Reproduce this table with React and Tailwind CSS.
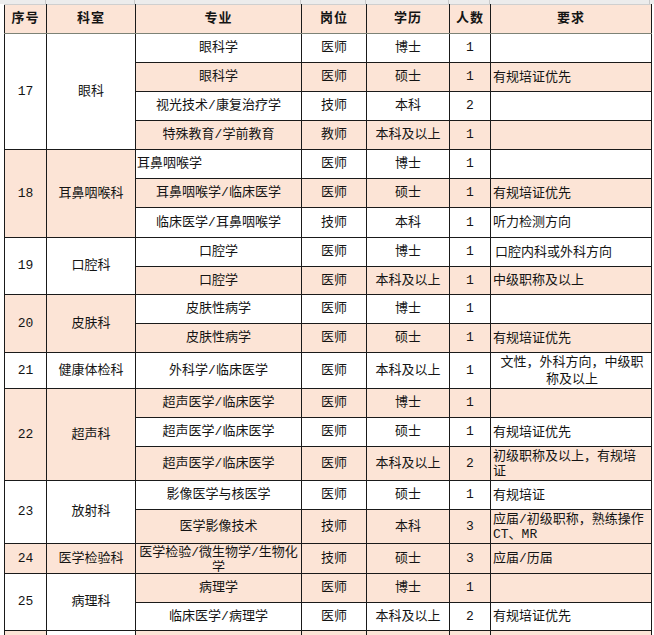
import React from "react";

const P = "bg-[#fce4d6]";
const W = "bg-white";

const groups = [
  {
    no: "17",
    dept: "眼科",
    bg: W,
    rows: [
      { m: "眼科学", p: "医师", e: "博士", n: "1", r: "", bg: W },
      { m: "眼科学", p: "医师", e: "硕士", n: "1", r: "有规培证优先", bg: P },
      { m: "视光技术/康复治疗学", p: "技师", e: "本科", n: "2", r: "", bg: W },
      { m: "特殊教育/学前教育", p: "教师", e: "本科及以上", n: "1", r: "", bg: P },
    ],
  },
  {
    no: "18",
    dept: "耳鼻咽喉科",
    bg: P,
    rows: [
      { m: "耳鼻咽喉学", left: true, p: "医师", e: "博士", n: "1", r: "", bg: W },
      { m: "耳鼻咽喉学/临床医学", p: "医师", e: "硕士", n: "1", r: "有规培证优先", bg: P },
      { m: "临床医学/耳鼻咽喉学", p: "技师", e: "本科", n: "1", r: "听力检测方向", bg: W, h: "h-[30px]" },
    ],
  },
  {
    no: "19",
    dept: "口腔科",
    bg: W,
    rows: [
      { m: "口腔学", p: "医师", e: "博士", n: "1", r: "口腔内科或外科方向", indent: true, bg: W },
      { m: "口腔学", p: "医师", e: "本科及以上", n: "1", r: "中级职称及以上", bg: P, h: "h-[28px]" },
    ],
  },
  {
    no: "20",
    dept: "皮肤科",
    bg: P,
    rows: [
      { m: "皮肤性病学", p: "医师", e: "博士", n: "1", r: "", bg: W },
      { m: "皮肤性病学", p: "医师", e: "硕士", n: "1", r: "有规培证优先", bg: P },
    ],
  },
  {
    no: "21",
    dept: "健康体检科",
    bg: W,
    rows: [
      {
        m: "外科学/临床医学",
        p: "医师",
        e: "本科及以上",
        n: "1",
        r: ["文性，外科方向，中级职", "称及以上"],
        center: true,
        bg: W,
        h: "h-[36px]",
        lh: "leading-[17px]",
      },
    ],
  },
  {
    no: "22",
    dept: "超声科",
    bg: P,
    rows: [
      { m: "超声医学/临床医学", p: "医师", e: "博士", n: "1", r: "", bg: P },
      { m: "超声医学/临床医学", p: "医师", e: "硕士", n: "1", r: "有规培证优先", bg: W },
      {
        m: "超声医学/临床医学",
        p: "医师",
        e: "本科及以上",
        n: "2",
        r: ["初级职称及以上，有规培", "证"],
        bg: P,
        h: "h-[34px]",
      },
    ],
  },
  {
    no: "23",
    dept: "放射科",
    bg: W,
    rows: [
      { m: "影像医学与核医学", p: "医师", e: "硕士", n: "1", r: "有规培证", bg: W },
      {
        m: "医学影像技术",
        p: "技师",
        e: "本科",
        n: "3",
        r: ["应届/初级职称，熟练操作", "CT、MR"],
        bg: P,
        h: "h-[34px]",
      },
    ],
  },
  {
    no: "24",
    dept: "医学检验科",
    bg: P,
    rows: [
      {
        m: ["医学检验/微生物学/生物化", "学"],
        clip: true,
        p: "技师",
        e: "硕士",
        n: "3",
        r: "应届/历届",
        bg: P,
        h: "h-[30px]",
      },
    ],
  },
  {
    no: "25",
    dept: "病理科",
    bg: W,
    rows: [
      { m: "病理学", p: "医师", e: "博士", n: "1", r: "", bg: P },
      { m: "临床医学/病理学", p: "医师", e: "本科及以上", n: "2", r: "有规培证优先", bg: W, h: "h-[28px]" },
    ],
  },
];

const cell = "border border-[#1a1a1a] p-0 align-middle";

function Lines({ v }) {
  if (Array.isArray(v)) {
    return v.map((t, i) => (
      <React.Fragment key={i}>
        {i > 0 && <br />}
        {t}
      </React.Fragment>
    ));
  }
  return v;
}

const App = () => {
  const cols = [42, 89, 166, 65, 83, 41, 160];
  return (
    <div
      className="w-[654px] h-[635px] overflow-hidden bg-white text-[#141414] text-[13px]"
      style={{ fontFamily: '"Liberation Mono", "Noto Sans CJK SC", monospace' }}
    >
      {/* spreadsheet column header remnant */}
      <div className="flex h-[4px] bg-[#ececec] pl-[4px]">
        {cols.map((w, i) => (
          <div
            key={i}
            className="h-full border-r border-[#c9c9c9]"
            style={{ width: w }}
          />
        ))}
      </div>
      <div className="flex">
        <div className="w-[4px] shrink-0" />
        <table className="border-collapse table-fixed w-[647px]">
          <colgroup>
            <col className="w-[42px]" />
            <col className="w-[89px]" />
            <col className="w-[166px]" />
            <col className="w-[65px]" />
            <col className="w-[83px]" />
            <col className="w-[41px]" />
            <col className="w-[161px]" />
          </colgroup>
          <thead>
            <tr className="h-[29px]">
              {["序号", "科室", "专业", "岗位", "学历", "人数", "要求"].map((h) => (
                <th
                  key={h}
                  className={`border-x border-[#1a1a1a] border-t border-t-[#cfcfcf] border-b border-b-[#7d8276] ${P} p-0 text-center align-middle font-bold text-[13px] tracking-[1px]`}
                >
                  {h}
                </th>
              ))}
            </tr>
          </thead>
          <tbody>
            {groups.map((g) =>
              g.rows.map((r, i) => (
                <tr key={g.no + i} className={r.h || "h-[29px]"}>
                  {i === 0 && (
                    <>
                      <td rowSpan={g.rows.length} className={`${cell} ${g.bg} text-center`}>
                        {g.no}
                      </td>
                      <td rowSpan={g.rows.length} className={`${cell} ${g.bg} text-center`}>
                        {g.dept}
                      </td>
                    </>
                  )}
                  <td
                    className={`${cell} ${r.bg} ${
                      r.left ? "text-left pl-[1px]" : "text-center"
                    } ${r.clip ? "align-top" : ""}`}
                  >
                    {r.clip ? (
                      <div className="h-[28px] overflow-hidden leading-[15px] pt-[1px]">
                        <Lines v={r.m} />
                      </div>
                    ) : (
                      <Lines v={r.m} />
                    )}
                  </td>
                  <td className={`${cell} ${r.bg} text-center`}>{r.p}</td>
                  <td className={`${cell} ${r.bg} text-center`}>{r.e}</td>
                  <td className={`${cell} ${r.bg} text-center`}>{r.n}</td>
                  <td
                    className={`${cell} ${r.bg} ${
                      r.center ? "text-center" : "text-left"
                    } ${r.indent ? "pl-[4px]" : "pl-[2px]"} ${r.lh || "leading-[15px]"}`}
                  >
                    <Lines v={r.r} />
                  </td>
                </tr>
              ))
            )}
            <tr className="h-[29px]">
              <td className={`${cell} ${P}`} />
              <td className={`${cell} ${W} text-center align-top pt-[2px]`}>儿童保健科</td>
              <td className={`${cell} ${P}`} />
              <td className={`${cell} ${P}`} />
              <td className={`${cell} ${P}`} />
              <td className={`${cell} ${P}`} />
              <td className={`${cell} ${P}`} />
            </tr>
          </tbody>
        </table>
      </div>
    </div>
  );
}

export default App;
